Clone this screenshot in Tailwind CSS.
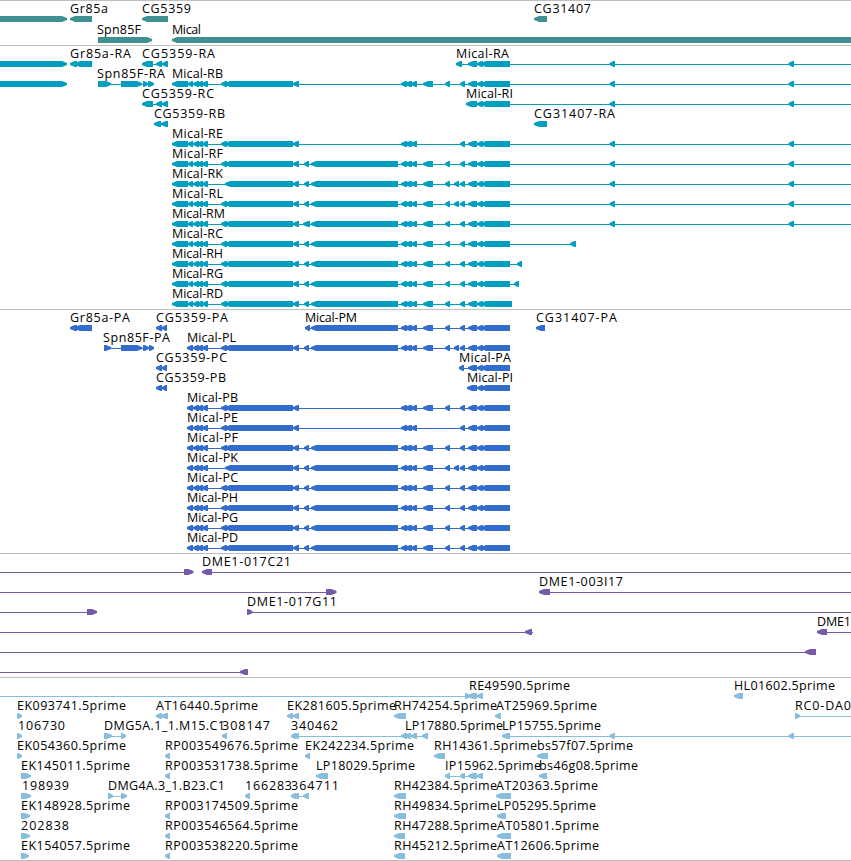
<!DOCTYPE html>
<html lang="en">
<head>
<meta charset="utf-8">
<title>Genome region: Mical</title>
<script src="https://cdn.jsdelivr.net/npm/@tailwindcss/browser@4"></script>
</head>
<body class="bg-white">
<main class="w-[851px] h-[861px] overflow-hidden flex flex-col border-b border-[#bebebe] font-['Open_Sans','Noto_Sans',sans-serif] text-[12.5px] text-black">
  <section class="h-[45px] shrink-0 border-t border-[#bebebe] text-[#408f91]"><svg id="genes" class="block w-full h-full" data-pitch="21"></svg></section>
  <section class="h-[264px] shrink-0 border-t border-[#bebebe] text-[#009fbf]"><svg id="transcripts" class="block w-full h-full" data-pitch="20"></svg></section>
  <section class="h-[244px] shrink-0 border-t border-[#bebebe] text-[#326ccc]"><svg id="proteins" class="block w-full h-full" data-pitch="20"></svg></section>
  <section class="h-[124px] shrink-0 border-t border-[#bebebe] text-[#755aa8]"><svg id="clones" class="block w-full h-full" data-pitch="20"></svg></section>
  <section class="h-[183px] shrink-0 border-t border-[#bebebe] text-[#88bddd]"><svg id="ests" class="block w-full h-full" data-pitch="20"></svg></section>
</main>
<script>
// Feature: [label, labelStart, labelEnd, strand, lineStart, lineEnd, [[exonStart, exonEnd], ...]]
const rHead = [[172,188],[188,193],[193,199],[197,203],[202,208]];
const pHead = [[187,193],[193,199],[197,203],[202,208]];
const big = [[221,227],[225,293],[293,299]], bigK = [[225,293],[293,299]];
const mid = [[304,309],[311,398]];
const trio = [[401,407],[405,412],[411,417]];
const tail = [[460,465],[468,477],[477,483],[481,510]];
const e423 = [[423,433]], e445 = [[445,450]], e454 = [[454,459]];
const far = [[609.5,615],[788.5,794]];
const full = [...mid, ...trio, ...e423, ...e445, ...tail];
const fullX = [...mid, ...trio, ...e423, ...e445, ...e454, ...tail];
const R = (n, ex, end = 851) => [['Mical-' + n, 172, n === 'RM' ? 225 : 223, -1, 176, end, [...rHead, ...ex]]];
const P = (n, ex) => [['Mical-' + n, 187, 238, -1, 190, 510, [...pHead, ...ex]]];
const last3 = tail.slice(1);

const tracks = {
  genes: [
    [['',0,0,1,0,0,[[-20,67]]], ['Gr85a',70,108,-1,0,0,[[70,92]]], ['CG5359',142,191,-1,0,0,[[142,168]]], ['CG31407',534,591,-1,0,0,[[534,547]]]],
    [['Spn85F',97,141,1,0,0,[[98,152]]], ['Mical',172,201,-1,0,0,[[172,860]]]]
  ],
  transcripts: [
    [['',0,0,1,0,0,[[-20,67]]], ['Gr85a-RA',70,131,-1,72,90,[[70,77],[75,92]]], ['CG5359-RA',142,215,-1,145,166,[[142,153],[156,162],[162,168]]], ['Mical-RA',456,509,-1,459,851,[[456,462],...last3,...far]]],
    [['',0,0,1,0,0,[[-20,67]]], ['Spn85F-RA',97,165,1,99,150,[[98,111],[121,142],[143,148],[148,154]]], ...R('RB',[...big,...trio,...e423,...e445,...tail,...far])],
    [['CG5359-RC',142,214,-1,145,166,[[142,153],[156,162],[162,168]]], ['Mical-RI',466,513,-1,469,851,[[466,477],...tail.slice(2),...far]]],
    [['CG5359-RB',154,225,-1,157,166,[[154,161],[161,168]]], ['CG31407-RA',534,615,-1,0,0,[[534,547]]]],
    R('RE',[...big,...trio,...tail,...far]),
    R('RF',[...big,...full,...far]),
    R('RK',[...bigK,...fullX,...far]),
    R('RL',[...big,...fullX,...far]),
    R('RM',[...big,[303,310],...full.slice(1),...far]),
    R('RC',[...big,...full,[570,576]],574),
    R('RH',[...big,...full,[517,522]],520),
    R('RG',[...big,...full,[514,519]],517),
    R('RD',[...big,...full,[486,512]],510)
  ],
  proteins: [
    [['Gr85a-PA',70,130,-1,72,90,[[70,77],[75,92]]], ['CG5359-PA',156,228,-1,158,165,[[156,162],[162,167]]], ['Mical-PM',305,357,-1,308,510,[[305,310],...full.slice(1)]], ['CG31407-PA',536,617,-1,0,0,[[536,545]]]],
    [['Spn85F-PA',103,170,1,105,151,[[104,111],[121,142],[143,149],[149,154]]], ['Mical-PL',187,236,-1,190,510,[...pHead,...big,...fullX]]],
    [['CG5359-PC',156,227,-1,158,165,[[156,162],[162,167]]], ['Mical-PA',459,511,-1,462,510,[[459,464],...last3]]],
    [['CG5359-PB',156,226,-1,158,165,[[156,162],[162,167]]], ['Mical-PI',467,513,-1,470,510,[[467,477],...tail.slice(2)]]],
    P('PB',[...big,...trio,...e423,...e445,...tail]),
    P('PE',[...big,...trio,...tail]),
    P('PF',[...big,...full]),
    P('PK',[...bigK,...fullX]),
    P('PC',[...big,...full]),
    P('PH',[...big,...full]),
    P('PG',[...big,...full]),
    P('PD',[...big,...full])
  ],
  clones: [
    [['',0,0,1,0,186,[[184,193.5]]], ['DME1-017C21',202,291,-1,205,851,[[202,212]]]],
    [['',0,0,1,0,328,[[326,336.5]]], ['DME1-003I17',539,623,-1,545,851,[[539,550]]]],
    [['',0,0,1,0,89,[[87,97]]], ['DME1-017G11',247,337,1,247,851,[[247,252.5]]]],
    [['',0,0,-1,0,533,[[525,532]]], ['DME1',817,851,-1,820,851,[[817,827]]]],
    [['',0,0,-1,0,808,[[805,816]]]],
    [['',0,0,-1,0,243,[[240,248]]]]
  ],
  ests: [
    [['',0,0,1,0,470,[[465,470]]], ['RE49590.5prime',469,570,-1,469,480,[[468,477],[477,483]]], ['HL01602.5prime',734,835,-1,0,0,[[734,743]]]],
    [['EK093741.5prime',17,126,1,0,0,[[17,22]]], ['AT16440.5prime',156,258,-1,158,166,[[156,162],[161,168]]], ['EK281605.5prime',287,396,-1,289,297,[[287,293],[293,299]]], ['RH74254.5prime',394,497,-1,0,0,[[394,406]]], ['AT25969.5prime',496,597,-1,0,0,[[495,501]]], ['RC0-DA0',795,851,1,795,851,[[795,800]]]],
    [['106730',18,65,1,0,0,[[17,22]]], ['DMG5A.1_1.M15.C1',104,225,1,106,123,[[104,112],[121,126]]], ['308147',222,270,-1,0,0,[[222,227]]], ['340462',291,338,-1,293,403,[[291,296],[293,299],[401,407]]], ['LP17880.5prime',405,503,-1,407,425,[[405,411],[411,417],[422,428]]], ['LP15755.5prime',502,601,-1,505,851,[[502,510],...far]]],
    [['EK054360.5prime',17,126,1,0,0,[[17,22]]], ['RP003549676.5prime',165,298,-1,0,0,[[165,170]]], ['EK242234.5prime',305,414,-1,0,0,[[305,310]]], ['RH14361.5prime',434,537,-1,0,0,[[434,445]]], ['bs57f07.5prime',537,633,-1,0,0,[[537,548]]]],
    [['EK145011.5prime',21,130,1,0,0,[[21,31]]], ['RP003531738.5prime',165,298,-1,0,0,[[165,170]]], ['LP18029.5prime',316,415,-1,0,0,[[316,328]]], ['IP15962.5prime',445,541,-1,448,480,[[445,450],[460,465],[468,477],[477,483]]], ['bs46g08.5prime',539,638,-1,0,0,[[539,547]]]],
    [['198939',22,69,1,0,0,[[21,31]]], ['DMG4A.3_1.B23.C1',108,225,1,110,124,[[108,113],[121,127]]], ['166283',245,292,-1,0,0,[[245,250]]], ['364711',291,339,-1,293,306,[[291,296],[293,299],[303,309]]], ['RH42384.5prime',394,497,-1,0,0,[[394,406]]], ['AT20363.5prime',496,598,-1,0,0,[[496,511]]]],
    [['EK148928.5prime',21,130,1,0,0,[[21,30]]], ['RP003174509.5prime',165,298,-1,0,0,[[165,170]]], ['RH49834.5prime',394,497,-1,0,0,[[394,406]]], ['LP05295.5prime',497,596,-1,0,0,[[497,506]]]],
    [['202838',21,69,1,0,0,[[21,30]]], ['RP003546564.5prime',165,298,-1,0,0,[[165,170]]], ['RH47288.5prime',394,497,-1,0,0,[[394,405]]], ['AT05801.5prime',497,599,-1,0,0,[[497,511]]]],
    [['EK154057.5prime',21,130,1,0,0,[[21,29]]], ['RP003538220.5prime',165,298,-1,0,0,[[165,170]]], ['RH45212.5prime',394,497,-1,0,0,[[394,405]]], ['AT12606.5prime',497,599,-1,0,0,[[497,511]]]]
  ]
};

// Exon block whose head tapers towards the strand direction
function exon([a, b], dir, y) {
  const h = Math.min(5, (b - a) * .75);
  const tip = dir < 0 ? a : b, base = dir < 0 ? b : a, s = dir < 0 ? 1 : -1;
  return `<polygon fill="currentColor" points="${tip},${y+2} ${tip+s*h*.5},${y+1} ${tip+s*h},${y} ${base},${y} ${base},${y+6} ${tip+s*h},${y+6} ${tip+s*h*.5},${y+5} ${tip},${y+4}"/>`;
}

for (const [id, rows] of Object.entries(tracks)) {
  const svg = document.getElementById(id), pitch = +svg.dataset.pitch;
  let out = '';
  rows.forEach((row, i) => {
    const top = i * pitch - 1;
    for (const [label, lx, le, dir, l0, l1, exons] of row) {
      if (l1 > l0) out += `<rect fill="currentColor" x="${l0}" y="${top+19}" width="${l1-l0}" height="1"/>`;
      out += exons.map(e => exon(e, dir, top + 16)).join('');
      if (label) out += `<text fill="#000" x="${lx}" y="${top+13}" textLength="${le-lx}">${label}</text>`;
    }
  });
  svg.innerHTML = out;
}
</script>
</body>
</html>
